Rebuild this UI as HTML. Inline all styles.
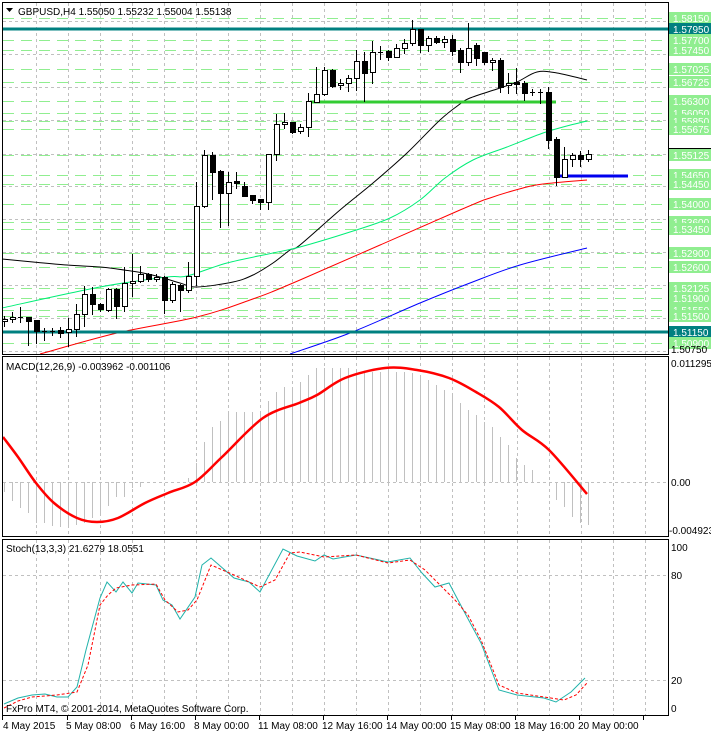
<!DOCTYPE html>
<html><head><meta charset="utf-8"><style>
html,body{margin:0;padding:0;background:#fff;width:711px;height:733px;overflow:hidden}
svg{display:block}
text{font-family:"Liberation Sans",sans-serif;font-size:10px}
</style></head><body>
<svg id="s" width="711" height="733" xmlns="http://www.w3.org/2000/svg">
<rect width="711" height="733" fill="#fff"/>
<g id="grid"></g>
<g id="lv"></g>
<g id="ma" fill="none" stroke-linejoin="round">
<polyline class="sm" stroke="#000" stroke-width="1" points="2,259 33,262 67,265 100,267 117,269 143,273 160,277 180,283 197,287 233,282 253,275 273,263 290,250 300,245 340,210 373,183 407,153 440,120 460,104 470,98 497,89 517,82 537,72 557,73 587,80"/>
<polyline class="sm" stroke="#00ee77" stroke-width="1" points="2,308 100,287 167,277 187,276 227,263 273,253 300,247 350,232 390,218 420,200 445,178 473,160 507,147 543,133 563,127 587,121"/>
<polyline class="sm" stroke="#ff0000" stroke-width="1" points="40,354 117,333 197,317 250,300 300,280 460,210 490,198 523,188 543,184 587,180"/>
<polyline class="sm" stroke="#0000ff" stroke-width="1" points="290,354 350,333 420,303 470,283 520,265 587,248"/>
</g>
<line x1="2" y1="29" x2="669" y2="29" stroke="#008080" stroke-width="3"/>
<line x1="2" y1="332" x2="669" y2="332" stroke="#008080" stroke-width="3"/>
<line x1="310" y1="102" x2="556" y2="102" stroke="#33cc33" stroke-width="3"/>
<line x1="556" y1="176" x2="628" y2="176" stroke="#0000ee" stroke-width="3"/>
<g id="cd"></g>
<g id="hist" stroke="#c0c0c0" stroke-width="1"></g>
<polyline class="sm" fill="none" stroke="#ff0000" stroke-width="2.5" stroke-linejoin="round" points="3,437 18,457 36,483 54,503 77,518 97,522 118,518 145,503 168,493 195,482 222,457 263,418 299,403 317,395 345,378 385,368 417,370 449,378 476,392 499,407 522,430 549,450 587,494"/>
<polyline fill="none" stroke="#20b2aa" stroke-width="1" points="4,704 18,698 32,695 45,694 57,697 68,697 77,687 86,650 100,598 107,582 116,592 123,582 132,593 138,583 156,585 163,600 172,605 180,619 195,597 202,565 211,558 234,578 249,582 260,592 283,549 297,556 315,561 324,555 333,559 356,555 388,562 410,558 422,573 435,587 449,583 467,617 481,643 499,690 517,695 544,698 556,702 571,692 585,678"/>
<polyline fill="none" stroke="#ff0000" stroke-width="1" stroke-dasharray="3 2" points="4,708 18,701 32,697 57,695 77,692 88,665 100,605 108,595 116,588 132,585 156,584 165,600 178,612 188,610 197,600 211,565 234,575 260,587 275,580 290,553 300,552 324,557 356,555 388,563 410,560 425,570 440,585 455,600 468,615 481,640 499,685 517,693 544,697 564,700 576,695 587,683"/>
<g fill="none" stroke="#000" stroke-width="1">
<rect x="2.5" y="2.5" width="666" height="352"/>
<rect x="2.5" y="356.5" width="666" height="180"/>
<rect x="2.5" y="539.5" width="666" height="176"/>
<line x1="668" y1="148.5" x2="711" y2="148.5"/>
</g>
<g id="lab"></g>
<path d="M6 8h7l-3.5 4z" fill="#000"/>
<text x="18" y="15" fill="#000">GBPUSD,H4  1.55050 1.55232 1.55004 1.55138</text>
<text x="6" y="370" fill="#000">MACD(12,26,9) -0.003962 -0.001106</text>
<text x="6" y="552" fill="#000">Stoch(13,3,3) 21.6279 18.0551</text>
<text x="6" y="712" fill="#000">FxPro MT4, © 2001-2014, MetaQuotes Software Corp.</text>
<g fill="#000">
<text x="671" y="367">0.011295</text>
<text x="671" y="486">0.00</text>
<text x="669" y="534">-0.004923</text>
<text x="671" y="551">100</text>
<text x="671" y="579">80</text>
<text x="671" y="684">20</text>
<text x="671" y="712">0</text>
<text x="3" y="729">4 May 2015</text>
<text x="66" y="729">5 May 08:00</text>
<text x="130" y="729">6 May 16:00</text>
<text x="194" y="729">8 May 00:00</text>
<text x="258" y="729">11 May 08:00</text>
<text x="322" y="729">12 May 16:00</text>
<text x="386" y="729">14 May 00:00</text>
<text x="450" y="729">15 May 08:00</text>
<text x="514" y="729">18 May 16:00</text>
<text x="578" y="729">20 May 00:00</text>
</g>
</svg>
<script>
var NS="http://www.w3.org/2000/svg";
function el(p,t,a){var e=document.createElementNS(NS,t);for(var k in a)e.setAttribute(k,a[k]);document.getElementById(p).appendChild(e);return e;}
// smoothing
Array.prototype.forEach.call(document.querySelectorAll("polyline.sm"),function(pl){
 var p=pl.getAttribute("points").trim().split(/\s+/).map(function(s){return s.split(",").map(Number);});
 var d="M"+p[0][0]+","+p[0][1];
 for(var i=0;i<p.length-1;i++){var p0=p[i-1]||p[i],p1=p[i],p2=p[i+1],p3=p[i+2]||p2;
  d+=" C"+(p1[0]+(p2[0]-p0[0])/6)+","+(p1[1]+(p2[1]-p0[1])/6)+" "+(p2[0]-(p3[0]-p1[0])/6)+","+(p2[1]-(p3[1]-p1[1])/6)+" "+p2[0]+","+p2[1];}
 var path=document.createElementNS(NS,"path");
 ["fill","stroke","stroke-width","stroke-linejoin"].forEach(function(a){if(pl.getAttribute(a))path.setAttribute(a,pl.getAttribute(a));});
 if(!pl.getAttribute("fill"))path.setAttribute("fill","none");
 path.setAttribute("d",d);pl.parentNode.replaceChild(path,pl);});
// grid
for(var x=35.5;x<668;x+=32.07){var xx=Math.round(x)+0.5;
 el("grid","line",{x1:xx,y1:3,x2:xx,y2:354,stroke:"#c0c0c0","stroke-dasharray":"3 3"});
 el("grid","line",{x1:xx,y1:357,x2:xx,y2:536,stroke:"#c0c0c0","stroke-dasharray":"3 3"});
 el("grid","line",{x1:xx,y1:540,x2:xx,y2:715,stroke:"#c0c0c0","stroke-dasharray":"3 3"});}
[21,54,87,120,154,186,219,252,285,318,351].forEach(function(y){el("grid","line",{x1:3,y1:y+.5,x2:668,y2:y+.5,stroke:"#c0c0c0","stroke-dasharray":"3 3"});});
[482,575,680].forEach(function(y){el("grid","line",{x1:3,y1:y+.5,x2:668,y2:y+.5,stroke:"#c0c0c0","stroke-dasharray":"3 3"});});
[2,67,131,195,259,323,387,451,515,579,643].forEach(function(x){el("grid","line",{x1:x+.5,y1:716,x2:x+.5,y2:720,stroke:"#000"});});
// levels
var lv=["1.58150","1.57950","1.57700","1.57450","1.57025","1.56725","1.56300","1.56050","1.55850","1.55675","1.55125","1.54650","1.54450","1.54000","1.53600","1.53450","1.52900","1.52600","1.52125","1.51900","1.51550","1.51500","1.51150","1.50900"];
var ly=[18,29,40,50,69,82,101,113,121,129,155,175,184,204,222,229,253,267,288,298,310,316,332,343];
lv.forEach(function(v,i){var y=ly[i];var teal=(v=="1.57950"||v=="1.51150");
 if(!teal) el("lv","line",{x1:3,y1:y+.5,x2:668,y2:y+.5,stroke:"#90ee90","stroke-dasharray":"11 7"});
 el("lab","rect",{x:669,y:y-6,width:42,height:12,fill:teal?"#008080":"#90ee90"});
 var t=el("lab","text",{x:673,y:y+4,fill:"#fff"});t.textContent=v;});
var tb=el("lab","text",{x:671,y:353,fill:"#000"});tb.textContent="1.50750";
// candles
var C=[[319,321,316,326,0],[317,319,312,322,0],[317,317,307,322,0],[317,321,317,345,1],[320,331,320,343,1],[331,331,328,340,0],[331,331,328,335,0],[330,333,327,337,1],[329,332,318,346,0],[314,329,304,336,0],[294,314,286,326,0],[294,304,287,314,1],[304,309,303,311,1],[289,310,288,311,0],[289,306,288,318,1],[283,306,267,311,0],[281,283,254,296,0],[274,281,266,282,0],[274,279,273,281,1],[277,279,274,281,0],[277,300,276,313,1],[284,300,282,302,0],[285,290,284,311,1],[276,290,262,292,0],[206,276,182,285,0],[155,206,150,207,0],[155,172,152,199,1],[171,193,170,227,1],[182,193,172,225,0],[181,183,172,188,1],[186,196,182,196,1],[195,200,195,203,1],[199,202,199,209,1],[154,202,154,209,0],[124,154,114,160,0],[122,124,113,128,0],[122,132,122,133,1],[127,131,124,133,0],[101,127,93,136,0],[94,102,67,102,0],[70,94,67,95,0],[70,86,69,87,1],[83,85,79,89,0],[78,83,75,91,0],[61,78,50,90,0],[61,73,52,101,1],[52,72,41,83,0],[52,52,46,59,0],[51,57,50,60,1],[48,57,44,57,0],[43,48,39,53,0],[29,43,20,45,0],[29,45,29,52,1],[38,45,36,51,0],[38,42,36,43,1],[39,42,36,47,0],[39,51,35,55,1],[50,62,48,72,1],[48,62,23,65,0],[45,58,43,65,1],[52,62,52,64,1],[60,62,58,70,0],[60,87,58,92,1],[83,85,73,93,0],[82,84,68,93,1],[83,93,81,100,1],[92,92,89,95,0],[92,92,89,103,0],[92,140,87,148,1],[139,177,137,185,1],[159,177,147,177,0],[155,159,153,166,0],[155,159,151,166,1],[154,159,150,161,0]];
C.forEach(function(c,i){var x=4+8*i;
 el("cd","line",{x1:x+.5,y1:c[2],x2:x+.5,y2:c[3]+1,stroke:"#000"});
 if(c[0]==c[1]) el("cd","line",{x1:x-2,y1:c[0]+.5,x2:x+3,y2:c[0]+.5,stroke:"#000"});
 else el("cd","rect",{x:x-2+.5,y:c[0]+.5,width:5,height:c[1]-c[0],fill:c[4]?"#000":"#fff",stroke:"#000"});});
// histogram
var H=[492,501,508,513,523,523,526,527,527,525,523,518,513,506,497,497,488,487,483,482,482,482,482,478,463,442,427,421,412,412,412,412,412,401,392,387,387,382,375,368,368,368,368,368,370,372,372,372,372,372,372,373,375,380,385,390,395,403,410,415,422,427,437,445,458,465,470,482,482,500,507,517,523,525];
H.forEach(function(y,i){var x=4+8*i+.5;if(y!=482)el("hist","line",{x1:x,y1:482,x2:x,y2:y});});
</script>
</body></html>
